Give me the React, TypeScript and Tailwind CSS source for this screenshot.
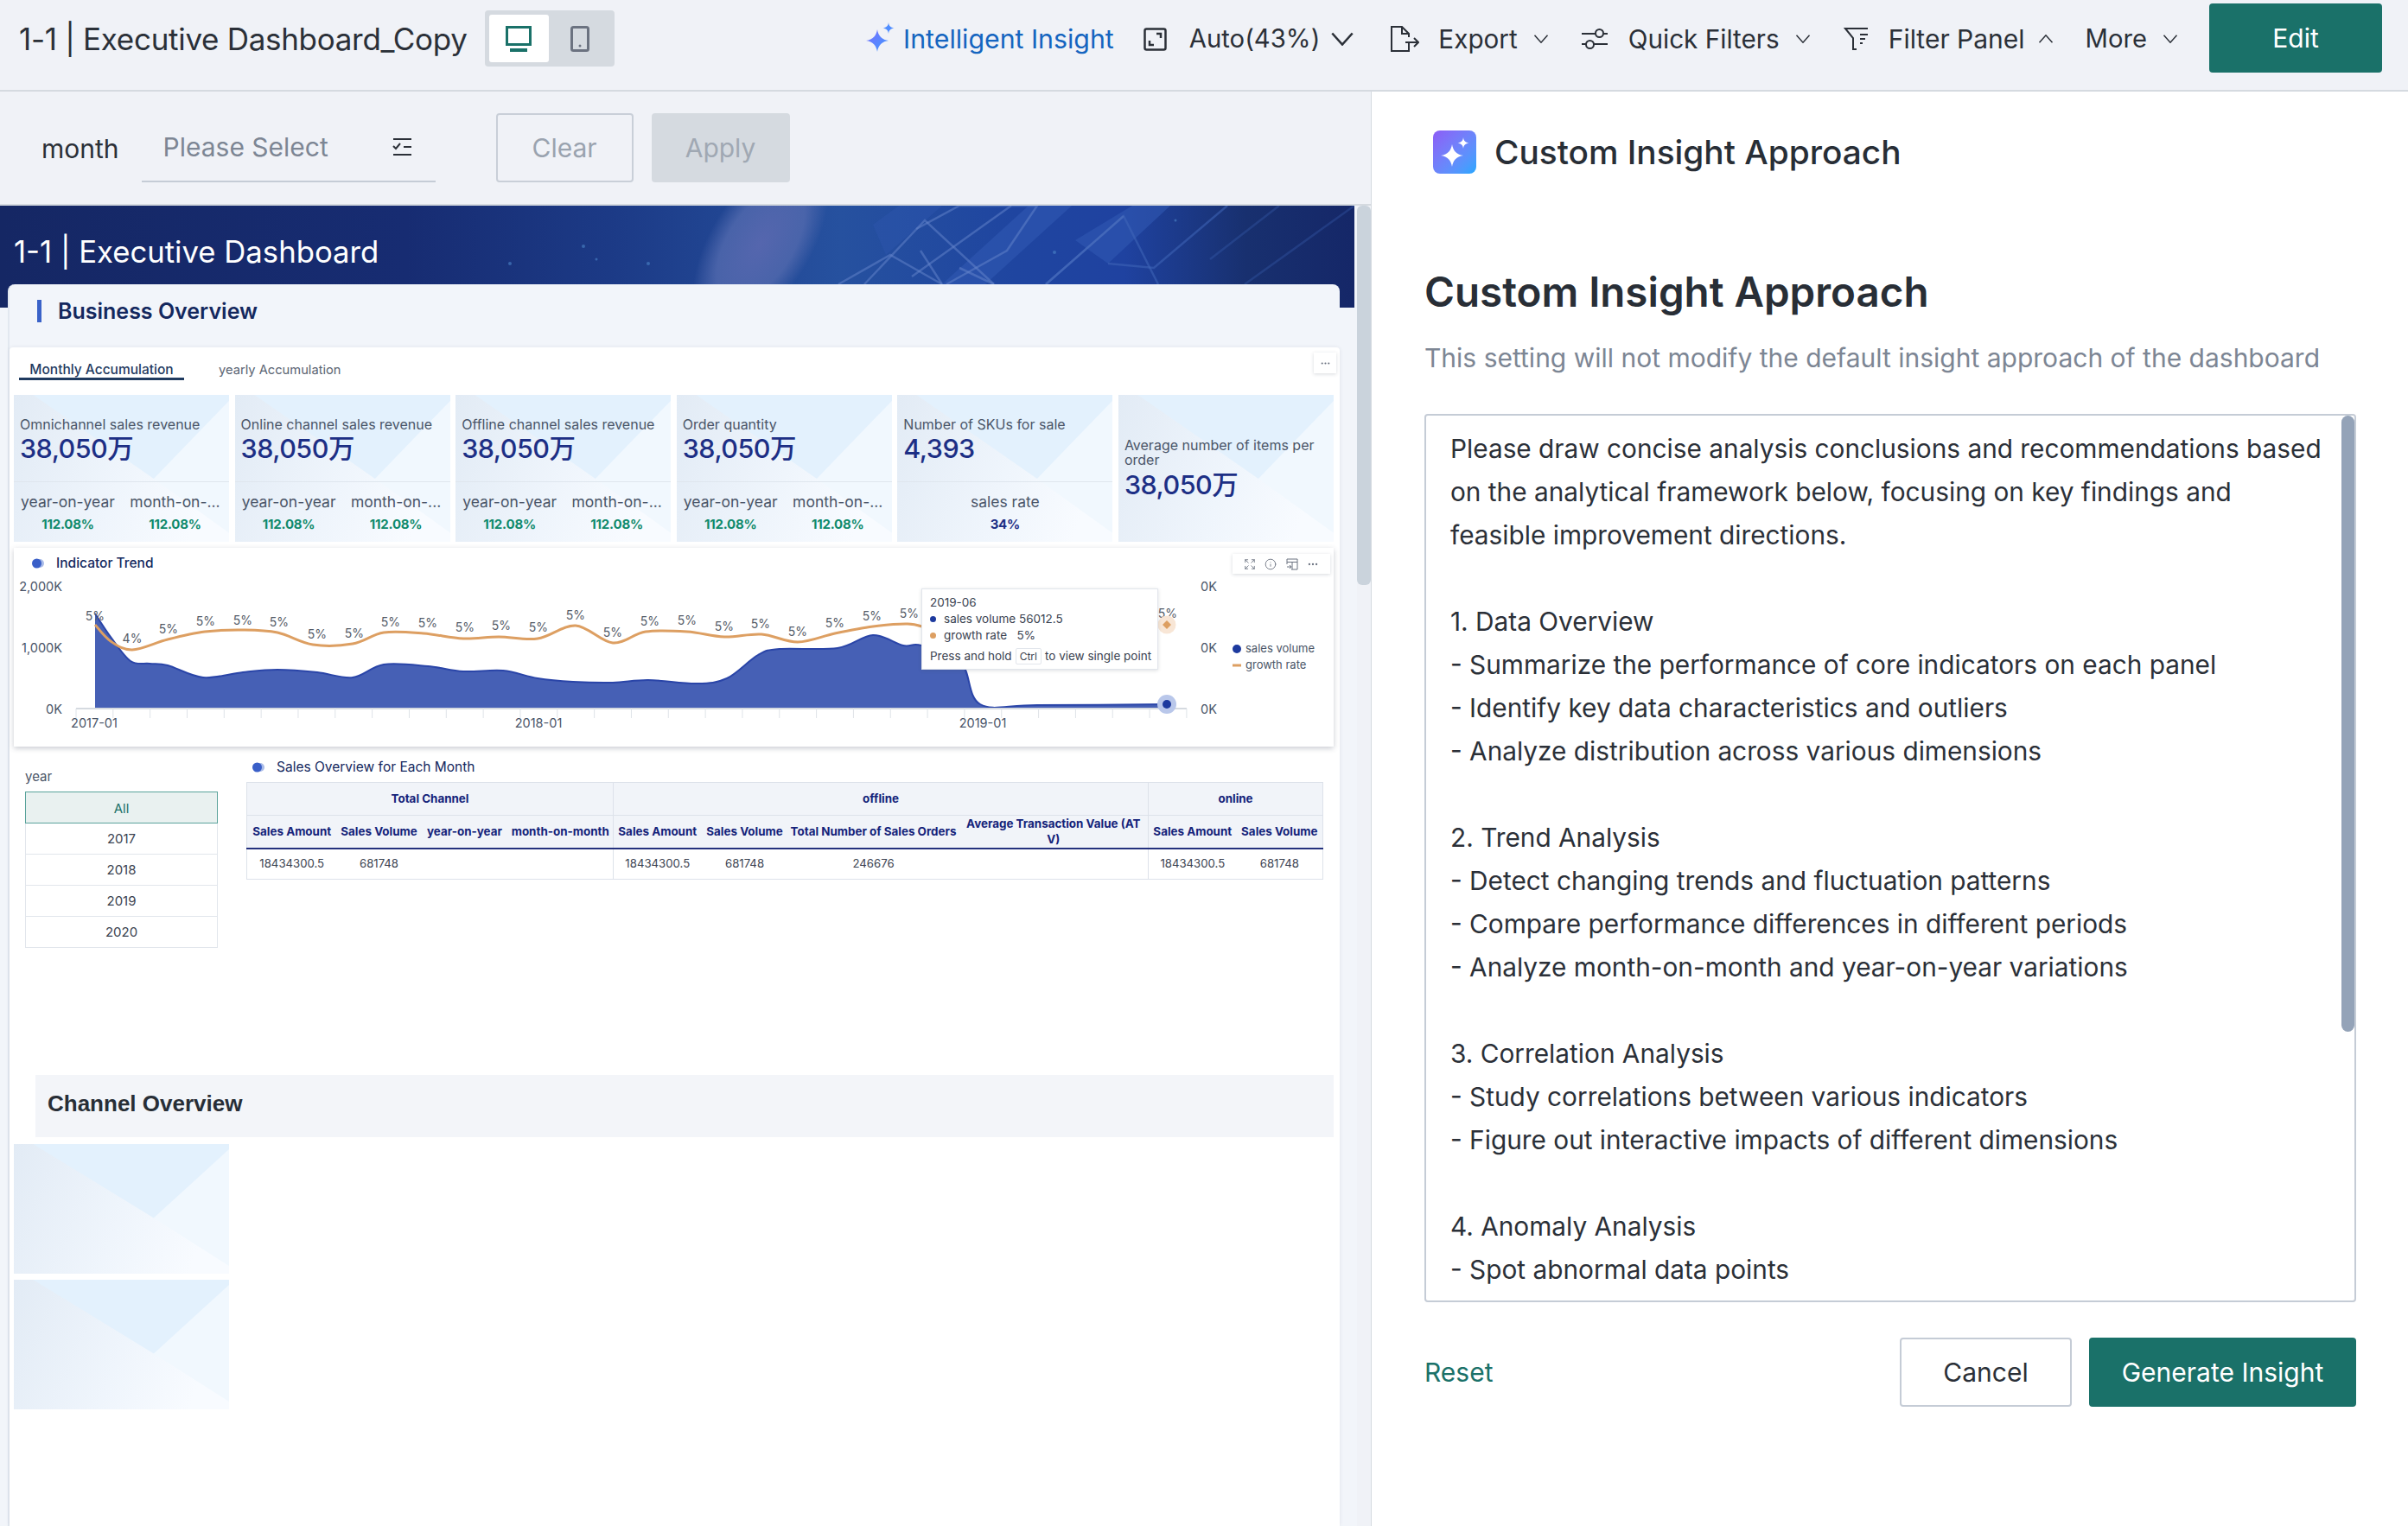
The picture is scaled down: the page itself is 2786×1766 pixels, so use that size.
import React from "react";
import { Expand, Info, Ellipsis } from "lucide-react";

const GREEN = "#1a7169";

function smooth(pts: number[][]): string {
  let d = `M${pts[0][0]} ${pts[0][1]}`;
  for (let i = 0; i < pts.length - 1; i++) {
    const p0 = pts[Math.max(i - 1, 0)];
    const p1 = pts[i];
    const p2 = pts[i + 1];
    const p3 = pts[Math.min(i + 2, pts.length - 1)];
    const c1x = p1[0] + (p2[0] - p0[0]) / 6;
    const c1y = p1[1] + (p2[1] - p0[1]) / 6;
    const c2x = p2[0] - (p3[0] - p1[0]) / 6;
    const c2y = p2[1] - (p3[1] - p1[1]) / 6;
    d += ` C${c1x} ${c1y} ${c2x} ${c2y} ${p2[0]} ${p2[1]}`;
  }
  return d;
}

const ORANGE = [[110,723],[128,742],[153,752],[194,740],[237,731],[281,729],[321,732],[362,746],[408,745],[444,732],[490,733],[536,739],[577,737],[622,739],[666,724],[709,744],[747,731],[795,731],[838,737],[881,734],[923,743],[966,733],[1010,725],[1050,722],[1070,726]];
const AREA = [[110,710],[128,737],[151,765],[173,768],[194,770],[235,784],[281,778],[321,775],[367,778],[408,784],[444,769],[495,771],[536,777],[582,776],[622,785],[663,789],[709,790],[750,787],[806,791],[841,785],[877,758],[902,751],[969,750],[1010,735],[1045,747],[1066,747],[1112,767],[1134,815],[1200,816],[1350,815]];
const LABELS: [string, number, number][] = [["5%",110,713],["4%",153,739],["5%",195,728],["5%",238,719],["5%",281,718],["5%",323,720],["5%",367,734],["5%",410,733],["5%",452,720],["5%",495,721],["5%",538,726],["5%",580,724],["5%",623,726],["5%",666,712],["5%",709,732],["5%",752,719],["5%",795,718],["5%",838,725],["5%",880,722],["5%",923,731],["5%",966,721],["5%",1009,713],["5%",1052,710],["5%",1351,710]];
const TICKS = Array.from({ length: 31 }, (_, i) => 88 + i * 42.83);

function Sparkle({ className }: { className?: string }) {
  return (
    <svg viewBox="0 0 34 34" className={className}>
      <defs>
        <linearGradient id="spk" x1="0" y1="0" x2="1" y2="1">
          <stop offset="0" stopColor="#7a6cff" />
          <stop offset="1" stopColor="#3f9bff" />
        </linearGradient>
      </defs>
      <path d="M14 8 C15 15 19 20 27 21 C19 22 15 27 14 34 C13 27 9 22 1 21 C9 20 13 15 14 8Z" fill="url(#spk)" />
      <path d="M27 0 C27.5 4 29.5 6 33.5 6.5 C29.5 7 27.5 9 27 13 C26.5 9 24.5 7 20.5 6.5 C24.5 6 26.5 4 27 0Z" fill="#4f8dff" />
    </svg>
  );
}

function Chevron({ up, big }: { up?: boolean; big?: boolean }) {
  return (
    <svg viewBox="0 0 20 12" className={big ? "w-[26px] h-[16px]" : "w-[18px] h-[10px]"} fill="none" stroke="#2b3038" strokeWidth={big ? 2 : 1.8}>
      <path d={up ? "M1 11 L10 1 L19 11" : "M1 1 L10 11 L19 1"} />
    </svg>
  );
}

function KpiBg() {
  return (
    <svg viewBox="0 0 100 100" preserveAspectRatio="none" className="absolute inset-0 w-full h-full">
      <defs>
        <linearGradient id="kbg" x1="0" y1="0" x2="1" y2="0.25">
          <stop offset="0" stopColor="#e2ebf5" />
          <stop offset="0.6" stopColor="#eff5fc" />
          <stop offset="1" stopColor="#f8fbff" />
        </linearGradient>
      </defs>
      <rect width="100" height="100" fill="url(#kbg)" />
      <polygon points="65,57 100,94 100,4" fill="#f1f8fe" />
      <polygon points="9,0 100,0 100,4 65,57" fill="#e3f1fd" />
    </svg>
  );
}

function Pct({ v, navy }: { v: string; navy?: boolean }) {
  return <div className={`text-[15px] leading-[20px] font-bold tracking-[-0.2px] ${navy ? "text-[#1d2f85]" : "text-[#0f8a6c]"}`}>{v}</div>;
}

function Kpi({ label, value, stats }: { label: string; value: string; stats?: { name: string; v: string; navy?: boolean }[] }) {
  return (
    <div className="relative h-[170px] overflow-hidden">
      <KpiBg />
      {stats ? (
        <div className="relative h-full flex flex-col">
          <div className="h-[101px] border-b border-[#dfe6ee] pl-[7px] pt-[24px]">
            <div className="text-[16px] leading-[20px] text-[#4a5568] whitespace-nowrap">{label}</div>
            <div className="text-[30.5px] leading-[34px] mt-[1px] text-[#1d2f85] font-medium tracking-[-0.5px]">{value}</div>
          </div>
          <div className="flex pl-[7px] pr-[7px] pt-[12px] gap-[13px]">
            {stats.map((s, i) => (
              <div key={i} className={`${stats.length === 1 ? "w-full" : "w-[111px]"} text-center`}>
                <div className="text-[17.5px] leading-[22px] text-[#4a5568] whitespace-nowrap overflow-hidden">{s.name}</div>
                <div className="mt-[5px]">
                  <Pct v={s.v} navy={s.navy} />
                </div>
              </div>
            ))}
          </div>
        </div>
      ) : (
        <div className="relative pl-[7px] pt-[50px] pr-[7px]">
          <div className="text-[16px] leading-[17px] text-[#4a5568]">{label}</div>
          <div className="text-[30.5px] leading-[34px] mt-[3px] text-[#1d2f85] font-medium tracking-[-0.5px]">{value}</div>
        </div>
      )}
    </div>
  );
}

function Dot() {
  return (
    <svg viewBox="0 0 14 12" className="w-[14px] h-[12px] shrink-0">
      <circle cx="9" cy="6" r="5" fill="#a9bbe8" />
      <circle cx="5.5" cy="6" r="5.5" fill="#3a5fc8" />
    </svg>
  );
}

function Chart() {
  const orange = smooth(ORANGE);
  const area = smooth(AREA);
  return (
    <div className="relative h-[230px] mt-[7px] bg-white shadow-[0_2px_6px_rgba(60,70,90,0.28)]">
      <div className="flex items-center gap-[14px] pl-[21px] pt-[9px] text-[15.5px] leading-[18px] text-[#14285e]">
        <Dot />
        <span className="font-medium">Indicator Trend</span>
      </div>
      <svg viewBox="16 634 1527 230" className="absolute left-0 top-0 w-[1527px] h-[230px]">
        <g fontFamily="Inter, sans-serif" fontSize="14.5" fill="#4a5568">
          <text x="72" y="684" textAnchor="end">2,000K</text>
          <text x="72" y="755" textAnchor="end">1,000K</text>
          <text x="72" y="826" textAnchor="end">0K</text>
          <text x="1389" y="684">0K</text>
          <text x="1389" y="755">0K</text>
          <text x="1389" y="826">0K</text>
          <text x="109" y="842" textAnchor="middle">2017-01</text>
          <text x="623" y="842" textAnchor="middle">2018-01</text>
          <text x="1137" y="842" textAnchor="middle">2019-01</text>
          <text x="1441" y="755" fontSize="13">sales volume</text>
          <text x="1441" y="774" fontSize="13">growth rate</text>
        </g>
        <path d={`${area} L1350 820 L110 820Z`} fill="#4660b5" />
        <path d={area} fill="none" stroke="#2a45a8" strokeWidth="2" />
        <path d={orange} fill="none" stroke="#dd9f62" strokeWidth="3" />
        <line x1="88" y1="820" x2="1373" y2="820" stroke="#d5dae0" strokeWidth="2" />
        {TICKS.map((x) => (
          <line key={x} x1={x} y1="820" x2={x} y2="831" stroke="#dfe3e8" strokeWidth="1" />
        ))}
        <g fontFamily="Inter, sans-serif" fontSize="14" fill="#555c68" textAnchor="middle">
          {LABELS.map(([t, x, y], i) => (
            <text key={i} x={x} y={y + 5}>{t}</text>
          ))}
        </g>
        <circle cx="1350" cy="723" r="10.5" fill="#f8e6d6" />
        <polygon points="1350,718 1355,723 1350,728 1345,723" fill="#dd9f62" />
        <circle cx="1350" cy="815" r="11" fill="#b9c7ea" />
        <circle cx="1350" cy="815" r="5" fill="#1d3a9e" />
        <circle cx="1431" cy="751" r="5" fill="#1d3a9e" />
        <line x1="1426" y1="770" x2="1436" y2="770" stroke="#dd9f62" strokeWidth="3" />
      </svg>
      <div className="absolute left-[1410px] top-[7px] w-[113px] h-[23px] bg-white shadow-[0_1px_4px_rgba(60,70,90,0.2)] flex items-center justify-around px-[8px] text-[#6b7280]">
        <Expand size={14} strokeWidth={1.5} />
        <Info size={14} strokeWidth={1.5} />
        <svg viewBox="0 0 14 14" className="w-[14px] h-[14px]" fill="none" stroke="#6b7280" strokeWidth="1">
          <path d="M1 1 H13 V13 H6 M1 1 V7 M1 4.5 H13 M7 4.5 V13 M1 10 H6 M4 8 L6 10 L4 12" />
        </svg>
        <Ellipsis size={14} />
      </div>
      <div className="absolute left-[1050px] top-[47px] w-[274px] h-[94px] bg-white border border-[#e2e6ec] shadow-[0_1px_4px_rgba(60,70,90,0.18)] px-[9px] pt-[6px] text-[13.5px] leading-[19px] text-[#3a4250]">
        <div>2019-06</div>
        <div className="flex items-center gap-[9px]">
          <span className="w-[7px] h-[7px] rounded-full bg-[#1d3a9e]" />
          <span>sales volume 56012.5</span>
        </div>
        <div className="flex items-center gap-[9px]">
          <span className="w-[7px] h-[7px] rounded-full bg-[#dd9f62]" />
          <span>growth rate&nbsp;&nbsp;&nbsp;5%</span>
        </div>
        <div className="flex items-center gap-[4px] mt-[5px] whitespace-nowrap">
          <span>Press and hold</span>
          <span className="border border-[#e2e6ec] rounded-[2px] px-[4px] text-[12px] leading-[17px]">Ctrl</span>
          <span>to view single point</span>
        </div>
      </div>
    </div>
  );
}

const TH = "border-l border-[#dde2ea] text-[13.4px] leading-[15px] font-bold text-[#14237a] text-center align-middle whitespace-nowrap";
const THP = "text-[13.4px] leading-[15px] font-bold text-[#14237a] text-center whitespace-nowrap";
const TD = "text-[13.2px] text-[#3a4250] text-center";

function DataTable() {
  return (
    <table className="table-fixed w-[1245px] border border-[#dde2ea] border-collapse mt-[8px]">
      <colgroup>
        <col className="w-[104px]" />
        <col className="w-[98px]" />
        <col className="w-[100px]" />
        <col className="w-[122px]" />
        <col className="w-[102px]" />
        <col className="w-[100px]" />
        <col className="w-[198px]" />
        <col className="w-[219px]" />
        <col className="w-[102px]" />
        <col className="w-[100px]" />
      </colgroup>
      <thead className="bg-[#f1f4f9]">
        <tr className="h-[38px] border-b border-[#dde2ea]">
          <th colSpan={4} className={TH}>Total Channel</th>
          <th colSpan={4} className={TH}>offline</th>
          <th colSpan={2} className={TH}>online</th>
        </tr>
        <tr className="h-[38px] border-b-2 border-[#24317e]">
          <th className={TH}>Sales Amount</th>
          <th className={THP}>Sales Volume</th>
          <th className={THP}>year-on-year</th>
          <th className={THP}>month-on-month</th>
          <th className={TH}>Sales Amount</th>
          <th className={THP}>Sales Volume</th>
          <th className={THP}>Total Number of Sales Orders</th>
          <th className="text-[13.4px] leading-[18px] font-bold text-[#14237a] text-center">Average Transaction Value (AT<br />V)</th>
          <th className={TH}>Sales Amount</th>
          <th className={THP}>Sales Volume</th>
        </tr>
      </thead>
      <tbody>
        <tr className="h-[36px]">
          <td className={TD}>18434300.5</td>
          <td className={TD}>681748</td>
          <td />
          <td />
          <td className={`${TD} border-l border-[#dde2ea]`}>18434300.5</td>
          <td className={TD}>681748</td>
          <td className={TD}>246676</td>
          <td />
          <td className={`${TD} border-l border-[#dde2ea]`}>18434300.5</td>
          <td className={TD}>681748</td>
        </tr>
      </tbody>
    </table>
  );
}

function BannerArt() {
  return (
    <svg viewBox="0 238 1567 118" preserveAspectRatio="none" className="absolute inset-0 w-full h-full">
      <defs>
        <linearGradient id="bn" x1="0" y1="0" x2="1" y2="0">
          <stop offset="0" stopColor="#152764" />
          <stop offset="0.3" stopColor="#172c72" />
          <stop offset="0.45" stopColor="#1c3a86" />
          <stop offset="0.62" stopColor="#26519f" />
          <stop offset="0.75" stopColor="#1f45a0" />
          <stop offset="0.83" stopColor="#1f42a0" />
          <stop offset="0.92" stopColor="#18306f" />
          <stop offset="1" stopColor="#152768" />
        </linearGradient>
        <radialGradient id="glow">
          <stop offset="0" stopColor="#5566ae" stopOpacity="1" />
          <stop offset="0.65" stopColor="#5068ad" stopOpacity="0.85" />
          <stop offset="1" stopColor="#5068ad" stopOpacity="0" />
        </radialGradient>
      </defs>
      <rect x="0" y="238" width="1567" height="118" fill="url(#bn)" />
      <ellipse cx="880" cy="282" rx="115" ry="58" transform="rotate(-58 880 282)" fill="url(#glow)" />
      <g fill="#3159b2" fillOpacity="0.6">
        <polygon points="1244,278 1310,238 1354,238 1282,305" />
        <polygon points="1090,329 1190,238 1240,238 1140,329" />
        <polygon points="1010,260 1040,238 1090,238 1025,295" fillOpacity="0.35" />
      </g>
      <g fill="none" stroke="#6585cc" strokeOpacity="0.5" strokeWidth="2.5">
        <path d="M1000,329 L1070,255 L1150,329" />
        <path d="M970,329 L1030,295 L1090,329" />
        <path d="M1060,265 L1110,238 L1200,238 L1165,290 L1095,329" />
        <path d="M1055,320 L1170,238 M1210,329 L1300,250" />
        <path d="M1065,290 L1090,329 M1110,310 L1150,329" />
      </g>
      <g fill="none" stroke="#3f66b8" strokeOpacity="0.55" strokeWidth="2.5">
        <path d="M1282,305 L1335,310 L1420,238" />
        <path d="M1210,329 L1300,250 L1340,329" />
        <path d="M1440,329 L1567,238" strokeOpacity="0.3" />
        <path d="M1480,238 L1400,300" strokeOpacity="0.3" />
      </g>
      <g fill="#4c86c8" fillOpacity="0.6">
        <circle cx="1220" cy="292" r="2" />
        <circle cx="1360" cy="255" r="1.5" />
        <circle cx="675" cy="285" r="2" />
        <circle cx="590" cy="305" r="2" />
        <circle cx="690" cy="300" r="1.5" />
        <circle cx="750" cy="305" r="2" />
      </g>
    </svg>
  );
}

function TopBar() {
  return (
    <header className="h-[106px] shrink-0 bg-[#f0f2f7] border-b-2 border-[#d5dae0] flex items-start text-[#2b3038]">
      <div className="ml-[22px] mt-[25px] text-[35px] leading-[40px] tracking-[-0.3px] whitespace-nowrap">1-1 | Executive Dashboard_Copy</div>
      <div className="ml-[20px] mt-[12px] w-[150px] h-[65px] bg-[#d5dae0] rounded-[4px] p-[5px] flex">
        <div className="w-[70px] h-[55px] bg-white rounded-[3px] flex items-center justify-center">
          <svg viewBox="0 0 30 30" className="w-[30px] h-[30px]" fill="none" stroke={GREEN} strokeWidth="3">
            <rect x="1.5" y="1.5" width="27" height="20" />
            <path d="M5 28 H25" strokeWidth="4" />
          </svg>
        </div>
        <div className="w-[70px] h-[55px] flex items-center justify-center ml-[2px]">
          <svg viewBox="0 0 22 30" className="w-[22px] h-[30px]" fill="none" stroke="#6b7280" strokeWidth="3">
            <rect x="1.5" y="1.5" width="19" height="27" rx="2" />
            <circle cx="11" cy="23" r="1.5" fill="#6b7280" stroke="none" />
          </svg>
        </div>
      </div>
      <div className="flex-1" />
      <div className="flex items-center h-[90px] text-[30px] leading-[40px] whitespace-nowrap">
        <Sparkle className="w-[34px] h-[34px] mb-[4px]" />
        <span className="ml-[10px] text-[30.3px] text-[#1565c0]">Intelligent Insight</span>
        <svg viewBox="0 0 27 27" className="ml-[34px] w-[27px] h-[27px]" fill="none" stroke="#2b3038" strokeWidth="2.5">
          <rect x="1.5" y="1.5" width="24" height="24" rx="2" />
          <path d="M15 7 H20 V12 M7 15 V20 H12" />
        </svg>
        <span className="ml-[26px] text-[29.3px]">Auto(43%)</span>
        <span className="ml-[13px]"><Chevron big /></span>
        <svg viewBox="0 0 34 32" className="ml-[42px] w-[34px] h-[32px]" fill="none" stroke="#2b3038" strokeWidth="2">
          <path d="M22 20 V30 H2 V2 H14 L22 10 V14 M14 2 V10 H22 M18 20 H33 M28 15 L33 20 L28 25" />
        </svg>
        <span className="ml-[22px] text-[29.7px]">Export</span>
        <span className="ml-[18px]"><Chevron /></span>
        <svg viewBox="0 0 32 26" className="ml-[37px] w-[32px] h-[26px]" fill="none" stroke="#2b3038" strokeWidth="2">
          <path d="M1 7 H17 M26 7 H31 M1 19 H6 M15 19 H31" />
          <circle cx="21.5" cy="6.5" r="4.5" />
          <circle cx="10.5" cy="19.5" r="4.5" />
        </svg>
        <span className="ml-[23px] text-[29.7px]">Quick Filters</span>
        <span className="ml-[18px]"><Chevron /></span>
        <svg viewBox="0 0 30 28" className="ml-[38px] w-[30px] h-[28px]" fill="none" stroke="#2b3038" strokeWidth="2">
          <path d="M28 2 H2 L11 13 V26 H15 M19 9 H28 M19 14 H25 M19 19 H22" />
        </svg>
        <span className="ml-[22px]">Filter Panel</span>
        <span className="ml-[15px]"><Chevron up /></span>
        <span className="ml-[37px] text-[29.2px]">More</span>
        <span className="ml-[18px]"><Chevron /></span>
        <div className="ml-[36px] mr-[30px] w-[200px] h-[80px] mb-[2px] bg-[#1a7169] rounded-[4px] flex items-center justify-center text-white">Edit</div>
      </div>
    </header>
  );
}

function FilterRow() {
  return (
    <div className="h-[132px] shrink-0 bg-[#f0f2f7] border-b-2 border-[#d5dae0] flex items-start text-[30px]">
      <div className="ml-[48px] mt-[46px] leading-[40px] text-[#2b3038]">month</div>
      <div className="ml-[26px] w-[340px] h-[105px] border-b-2 border-[#c5ccd6] flex items-end justify-between pl-[25px] pr-[27px] pb-[19px]">
        <span className="leading-[40px] text-[#7d8694]">Please Select</span>
        <svg viewBox="0 0 24 20" className="w-[24px] h-[20px] mb-[10px]" fill="none" stroke="#2b3038" strokeWidth="2">
          <path d="M2 1 H23 M2 19 H23 M14 10 H23 M2 9 L5 12 L10 6" />
        </svg>
      </div>
      <div className="ml-[70px] mt-[25px] w-[159px] h-[80px] border-2 border-[#c9cfd8] rounded-[4px] flex items-center justify-center text-[#9aa3af]">Clear</div>
      <div className="ml-[21px] mt-[25px] w-[160px] h-[80px] bg-[#d5dae0] rounded-[4px] flex items-center justify-center text-[#a0a8b3]">Apply</div>
    </div>
  );
}

function Dashboard() {
  const two = [
    { name: "year-on-year", v: "112.08%" },
    { name: "month-on-...", v: "112.08%" },
  ];
  return (
    <div className="relative flex-1 overflow-hidden bg-[#f2f5fa]">
      <div className="absolute right-0 top-0 bottom-0 w-[16px] bg-[#f0f2f7]" />
      <div className="absolute right-0 top-0 w-[16px] h-[439px] rounded-[6px] bg-[#cad3dc]" />
      <div className="relative h-[118px] w-[1567px] overflow-hidden">
        <BannerArt />
        <div className="relative pl-[16px] pt-[31px] text-[34.7px] leading-[44px] text-white">1-1 | Executive Dashboard</div>
      </div>
      <div className="relative -mt-[27px] ml-[9px] w-[1541px] rounded-t-[8px] bg-[#f2f5fa] border-l-2 border-[#e2e8f0]">
        <div className="h-[73px] flex items-start pt-[18px] pl-[32px]">
          <span className="w-[5px] h-[26px] bg-[#3a62c8]" />
          <span className="ml-[19px] text-[25px] leading-[26px] font-semibold text-[#14285e]">Business Overview</span>
        </div>
        <div className="relative bg-white rounded-t-[4px] h-[1364px] shadow-[0_0_4px_rgba(60,70,90,0.1)] pl-[5px] pr-[7px]">
          <div className="absolute right-[4px] top-[6px] w-[26px] h-[24px] bg-white shadow-[0_1px_4px_rgba(60,70,90,0.2)] flex items-center justify-center text-[#6b7280]">
            <Ellipsis size={13} />
          </div>
          <div className="h-[55px] flex items-start leading-[20px] pl-[6px] pt-[16px]">
            <div className="w-[191px] h-[22px] border-b-[3px] border-[#1f3a5f] text-center text-[15.5px] font-medium text-[#1f3a5f]">Monthly Accumulation</div>
            <div className="ml-[40px] text-[14.7px] text-[#5a6472]">yearly Accumulation</div>
          </div>
          <div className="grid grid-cols-6 gap-x-[6.5px]">
            <Kpi label="Omnichannel sales revenue" value="38,050万" stats={two} />
            <Kpi label="Online channel sales revenue" value="38,050万" stats={two} />
            <Kpi label="Offline channel sales revenue" value="38,050万" stats={two} />
            <Kpi label="Order quantity" value="38,050万" stats={two} />
            <Kpi label="Number of SKUs for sale" value="4,393" stats={[{ name: "sales rate", v: "34%", navy: true }]} />
            <Kpi label="Average number of items per order" value="38,050万" />
          </div>
          <Chart />
          <div className="h-[380px] flex items-start pl-[13px]">
            <div className="w-[223px] pt-[26px] shrink-0">
              <div className="text-[15px] leading-[18px] text-[#4a5568]">year</div>
              <div className="mt-[8px] text-[15px] text-[#3a4250] text-center">
                <div className="h-[37px] leading-[37px] bg-[#e9f1f0] border border-[#5aa39b] text-[#1a7169]">All</div>
                {["2017", "2018", "2019", "2020"].map((y) => (
                  <div key={y} className="h-[36px] leading-[35px] border border-t-0 border-[#e2e6ec]">{y}</div>
                ))}
              </div>
            </div>
            <div className="ml-[33px] pt-[15px]">
              <div className="flex items-center gap-[14px] pl-[7px] text-[15.5px] leading-[18px] text-[#14285e]">
                <Dot />
                <span>Sales Overview for Each Month</span>
              </div>
              <DataTable />
            </div>
          </div>
          <div className="ml-[25px] h-[72px] bg-[#f3f5f9] pl-[14px] pb-[6px] flex items-center text-[26px] font-bold text-[#282e36] font-['Liberation_Sans',sans-serif]">Channel Overview</div>
          <div className="mt-[8px] w-[249px] h-[150px] relative"><KpiBg /></div>
          <div className="mt-[7px] w-[249px] h-[150px] relative"><KpiBg /></div>
        </div>
      </div>
    </div>
  );
}

const PROMPT = `Please draw concise analysis conclusions and recommendations based
on the analytical framework below, focusing on key findings and
feasible improvement directions.

1. Data Overview
- Summarize the performance of core indicators on each panel
- Identify key data characteristics and outliers
- Analyze distribution across various dimensions

2. Trend Analysis
- Detect changing trends and fluctuation patterns
- Compare performance differences in different periods
- Analyze month-on-month and year-on-year variations

3. Correlation Analysis
- Study correlations between various indicators
- Figure out interactive impacts of different dimensions

4. Anomaly Analysis
- Spot abnormal data points`;

function InsightPanel() {
  return (
    <aside className="flex-1 bg-white border-l border-[#d5dae0] pl-[71px] pr-[60px]">
      <div className="flex items-center pt-[45px] h-[95px]">
        <div className="w-[50px] h-[50px] rounded-[8px] bg-gradient-to-br from-[#8b5cf6] to-[#1ea7ff] flex items-center justify-center">
          <svg viewBox="0 0 34 34" className="w-[34px] h-[34px]" fill="white">
            <path d="M14 8 C15 15 19 20 27 21 C19 22 15 27 14 34 C13 27 9 22 1 21 C9 20 13 15 14 8Z" />
            <path d="M27 0 C27.5 4 29.5 6 33.5 6.5 C29.5 7 27.5 9 27 13 C26.5 9 24.5 7 20.5 6.5 C24.5 6 26.5 4 27 0Z" />
          </svg>
        </div>
        <div className="ml-[21px] text-[38.8px] leading-[48px] font-medium text-[#282e36] whitespace-nowrap">Custom Insight Approach</div>
      </div>
      <div className="-ml-[10px] mt-[107px]">
        <h2 className="text-[47.5px] leading-[60px] font-semibold text-[#282e36] whitespace-nowrap">Custom Insight Approach</h2>
        <div className="mt-[26px] text-[30px] leading-[40px] text-[#7d8694] whitespace-nowrap">This setting will not modify the default insight approach of the dashboard</div>
        <div className="relative mt-[45px] w-[1078px] h-[1028px] border-2 border-[#c5ccd6] rounded-[4px] overflow-hidden pl-[28px] pt-[13px]">
          <div className="whitespace-pre text-[29.8px] leading-[50px] text-[#2b3038]">{PROMPT}</div>
          <div className="absolute right-0 top-0 w-[15px] h-[713px] rounded-[8px] bg-[#94a3b8]" />
        </div>
        <div className="mt-[41px] flex items-center text-[30px]">
          <span className="text-[#1a7169]">Reset</span>
          <div className="flex-1" />
          <div className="w-[199px] h-[80px] border-2 border-[#c5ccd6] rounded-[4px] flex items-center justify-center text-[#2b3038]">Cancel</div>
          <div className="ml-[20px] w-[309px] h-[80px] rounded-[4px] bg-[#1a7169] flex items-center justify-center text-white">Generate Insight</div>
        </div>
      </div>
    </aside>
  );
}

export default function App() {
  return (
    <div className="w-[2786px] h-[1766px] overflow-hidden flex flex-col bg-white font-['Inter','Noto_Sans_CJK_SC',sans-serif]">
      <TopBar />
      <div className="flex-1 flex min-h-0">
        <div className="w-[1586px] shrink-0 flex flex-col">
          <FilterRow />
          <Dashboard />
        </div>
        <InsightPanel />
      </div>
    </div>
  );
}
